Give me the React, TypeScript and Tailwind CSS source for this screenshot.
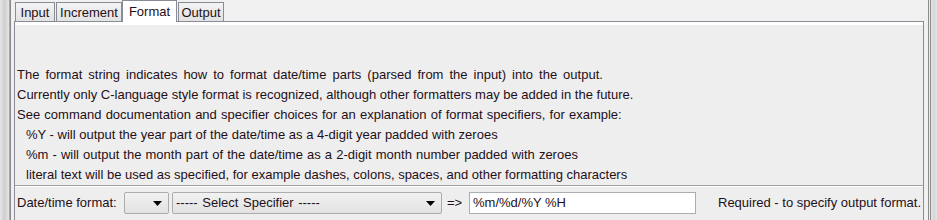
import React from "react";

const Arrow = () => (
  <svg width="9" height="5" viewBox="0 0 9 5" className="block">
    <path d="M0 0 H9 L4.5 5 Z" fill="#000" />
  </svg>
);

export default function App() {
  const lines = [
    { t: "The format string indicates how to format date/time parts (parsed from the input) into the output.", c: "[word-spacing:2.4px]" },
    { t: "Currently only C-language style format is recognized, although other formatters may be added in the future.", c: "" },
    { t: "See command documentation and specifier choices for an explanation of format specifiers, for example:", c: "[word-spacing:0.6px]" },
    { t: "%Y - will output the year part of the date/time as a 4-digit year padded with zeroes", c: "pl-[9px]" },
    { t: "%m - will output the month part of the date/time as a 2-digit month number padded with zeroes", c: "pl-[9px] [word-spacing:0.5px]" },
    { t: "literal text will be used as specified, for example dashes, colons, spaces, and other formatting characters", c: "pl-[9px]" },
  ];
  return (
    <div
      className="w-[937px] h-[220px] bg-[#f0f0f0] flex overflow-hidden text-[13px] text-[#1f0f18]"
      style={{ fontFamily: '"Liberation Sans", Arial, sans-serif' }}
    >
      <div className="w-[9px] h-full bg-gradient-to-r from-[#e6e6e6] via-[#cfcfcf] to-[#e6e6e6]" />
      <div className="w-px h-full bg-[#a8a8a8]" />
      <div className="w-px h-full bg-[#8a8a8a]" />
      <div className="w-[3px] h-full bg-[#f0f0f0]" />
      <div className="w-[910px] h-full flex flex-col">
        <div className="h-[21px] flex items-end pl-[1px]">
          <div className="w-[40px] h-[19px] border border-b-0 border-[#898c95] bg-gradient-to-b from-[#f3f3f3] to-[#e2e2e2] flex items-center justify-center leading-none pt-[1px]">
            Input
          </div>
          <div className="ml-[1px] w-[66px] h-[19px] border border-b-0 border-[#898c95] bg-gradient-to-b from-[#f3f3f3] to-[#e2e2e2] flex items-center justify-center leading-none pt-[1px]">
            Increment
          </div>
          <div className="w-[55px] h-[22px] -mb-[1px] border border-b-0 border-[#898c95] bg-white flex items-start justify-center leading-none pt-[4px] relative z-10">
            Format
          </div>
          <div className="ml-[1px] w-[46px] h-[19px] border border-b-0 border-[#898c95] bg-gradient-to-b from-[#f3f3f3] to-[#e2e2e2] flex items-center justify-center leading-none pt-[1px]">
            Output
          </div>
        </div>
        <div className="flex-1 border border-b-0 border-[#898c95] flex flex-col">
          <div className="h-[3px] bg-white" />
          <div className="flex-1 bg-[#eeeeee] flex flex-col">
            <div className="h-[40px]" />
            <div className="flex flex-col pl-[2px]">
              {lines.map((l, k) => (
                <div key={k} className={`h-[20px] flex items-center whitespace-nowrap ${l.c}`}>
                  {l.t}
                </div>
              ))}
            </div>
            <div className="h-px bg-[#a0a0a0]" />
            <div className="h-px bg-white" />
            <div className="flex items-center h-[22px] mt-[5px] pl-[2px] whitespace-nowrap">
              <div className="w-[107px]">Date/time format:</div>
              <div className="w-[45px] h-[22px] border border-[#acacac] rounded-[2px] bg-gradient-to-b from-[#f2f2f2] to-[#e2e2e2] flex items-center justify-end pr-[6px]">
                <Arrow />
              </div>
              <div className="ml-[3px] w-[270px] h-[22px] border border-[#acacac] rounded-[2px] bg-gradient-to-b from-[#f2f2f2] to-[#e2e2e2] flex items-center justify-between pl-[3px] pr-[6px]">
                <span className="[word-spacing:1px]">----- Select Specifier -----</span>
                <Arrow />
              </div>
              <div className="ml-[5px] w-[22px]">=&gt;</div>
              <div className="w-[227px] h-[22px] border border-[#abadb3] bg-white flex items-center pl-[3px]">
                %m/%d/%Y %H
              </div>
              <div className="ml-[22px]">Required - to specify output format.</div>
            </div>
          </div>
        </div>
      </div>
      <div className="w-[4px] h-full bg-[#f0f0f0]" />
      <div className="w-px h-full bg-[#8a8a8a]" />
      <div className="w-px h-full bg-[#f0f0f0]" />
      <div className="w-px h-full bg-[#8a8a8a]" />
      <div className="flex-1 h-full bg-gradient-to-r from-[#e6e6e6] via-[#d6d6d6] to-[#e6e6e6]" />
    </div>
  );
}
